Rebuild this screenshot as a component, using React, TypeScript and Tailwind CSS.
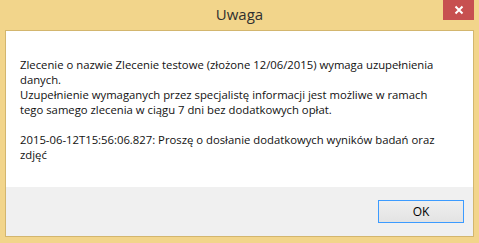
import React from "react";

const App: React.FC = () => {
  return (
    <div className="w-[479px] h-[243px] bg-[#f2d58b] flex flex-col font-['Segoe_UI','Open_Sans',sans-serif]">
      {/* Title bar */}
      <div className="h-[30px] flex relative">
        <div className="flex-1 flex items-center justify-center text-[15px] text-[#303030] pb-[2px]">Uwaga</div>
        <button className="absolute right-[5px] top-0 w-[31px] h-[20px] bg-[#c75050] flex items-center justify-center">
          <svg width="10" height="10" viewBox="0 0 10 10">
            <path d="M1.5 1.5 L8.5 8.5 M8.5 1.5 L1.5 8.5" stroke="#ffffff" strokeWidth="2" />
          </svg>
        </button>
      </div>

      {/* Client area */}
      <div className="mx-[5px] h-[207px] border border-[#d3b66e] flex flex-col">
        <div className="flex-1 bg-white pl-[14px] pr-4 pt-[26px] text-[11.3px] leading-[15px] text-[#111] whitespace-nowrap font-['Open_Sans',sans-serif]">
          <p>
            Zlecenie o nazwie Zlecenie testowe (złożone 12/06/2015) wymaga uzupełnienia
            <br />
            danych.
          </p>
          <p>
            Uzupełnienie wymaganych przez specjalistę informacji jest możliwe w ramach
            <br />
            tego samego zlecenia w ciągu 7 dni bez dodatkowych opłat.
          </p>
          <p className="mt-[15px]">
            2015-06-12T15:56:06.827: Proszę o dosłanie dodatkowych wyników badań oraz
            <br />
            zdjęć
          </p>
        </div>
        <div className="h-[49px] bg-[#f0f0f0] flex justify-end items-start pt-[13px] pr-[9px]">
          <button className="w-[86px] h-[23px] border border-[#3c9bff] bg-gradient-to-b from-[#efefef] to-[#e3e3e3] text-[12px] text-black font-['Open_Sans',sans-serif]">
            OK
          </button>
        </div>
      </div>
    </div>
  );
};

export default App;
